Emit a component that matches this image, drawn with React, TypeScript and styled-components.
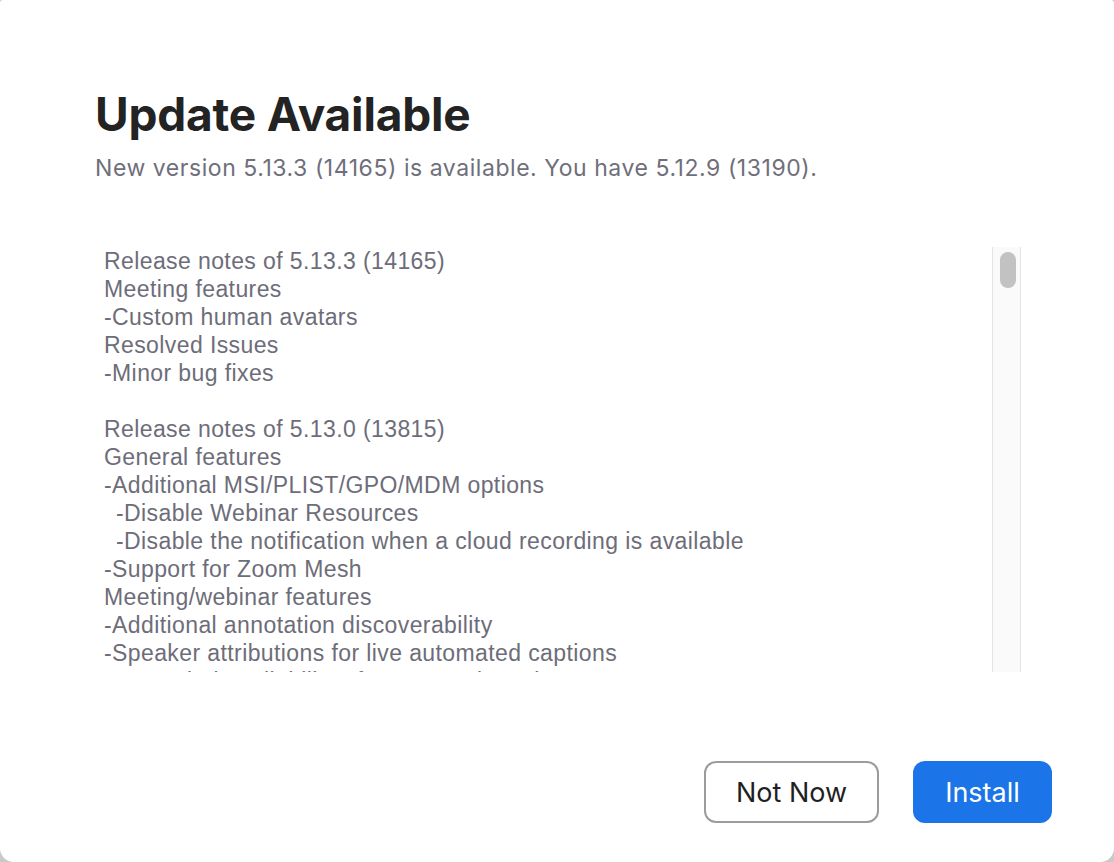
import React from "react";
import styled, { createGlobalStyle } from "styled-components";

const Global = createGlobalStyle`
  html, body { margin: 0; padding: 0; background: #c9c9c9; }
  body { width: 1114px; height: 862px; overflow: hidden; }
`;

const Window = styled.div`
  width: 1114px;
  height: 862px;
  box-sizing: border-box;
  background: #ffffff;
  border-radius: 3px 3px 14px 14px;
  display: flex;
  flex-direction: column;
  padding: 86px 62px 39px 95px;
`;

const Title = styled.h1`
  margin: 0;
  font-family: Inter, "Liberation Sans", sans-serif;
  font-weight: 700;
  font-size: 46px;
  line-height: 56px;
  color: #232323;
  letter-spacing: -0.2px;
`;

const Subtitle = styled.p`
  margin: 11px 0 0;
  font-family: Inter, "Liberation Sans", sans-serif;
  font-size: 23px;
  line-height: 30px;
  letter-spacing: 0.55px;
  color: #6f6f7b;
`;

const NotesBox = styled.div`
  margin-top: 64px;
  height: 425px;
  margin-right: 31px;
  display: flex;
  overflow: hidden;
`;

const Notes = styled.div`
  flex: 1;
  padding-left: 9px;
  font-family: "Liberation Sans", Arial, sans-serif;
  font-size: 23px;
  letter-spacing: 0.4px;
  line-height: 28px;
  color: #6d6d79;
  white-space: pre;
`;

const Line = styled.div<{ $indent?: boolean }>`
  height: 28px;
  padding-left: ${(p) => (p.$indent ? "12px" : "0")};
`;

const Track = styled.div`
  width: 29px;
  flex-shrink: 0;
  box-sizing: border-box;
  border-left: 1px solid #e4e4e4;
  border-right: 1px solid #e4e4e4;
  background: #fafafa;
  padding: 5px 0 0 7px;
`;

const Thumb = styled.div`
  width: 16px;
  height: 36px;
  border-radius: 8px;
  background: #c2c2c2;
`;

const Footer = styled.div`
  margin-top: auto;
  display: flex;
  justify-content: flex-end;
  gap: 34px;
`;

const Button = styled.button<{ $primary?: boolean }>`
  height: 62px;
  box-sizing: border-box;
  border-radius: 12px;
  font-family: Inter, "Liberation Sans", sans-serif;
  font-size: 27px;
  padding: 0;
  width: ${(p) => (p.$primary ? "139px" : "175px")};
  background: ${(p) => (p.$primary ? "#1b74e8" : "#ffffff")};
  color: ${(p) => (p.$primary ? "#ffffff" : "#1f1f24")};
  border: ${(p) => (p.$primary ? "none" : "2px solid #9c9c9c")};
`;

const lines: { t: string; indent?: boolean }[] = [
  { t: "Release notes of 5.13.3 (14165)" },
  { t: "Meeting features" },
  { t: "-Custom human avatars" },
  { t: "Resolved Issues" },
  { t: "-Minor bug fixes" },
  { t: "" },
  { t: "Release notes of 5.13.0 (13815)" },
  { t: "General features" },
  { t: "-Additional MSI/PLIST/GPO/MDM options" },
  { t: "-Disable Webinar Resources", indent: true },
  { t: "-Disable the notification when a cloud recording is available", indent: true },
  { t: "-Support for Zoom Mesh" },
  { t: "Meeting/webinar features" },
  { t: "-Additional annotation discoverability" },
  { t: "-Speaker attributions for live automated captions" },
  { t: "-Expanded availability of automated captions" },
];

export default function App() {
  return (
    <>
      <Global />
      <Window>
        <Title>Update Available</Title>
        <Subtitle>New version 5.13.3 (14165) is available. You have 5.12.9 (13190).</Subtitle>
        <NotesBox>
          <Notes>
            {lines.map((l, i) => (
              <Line key={i} $indent={l.indent}>
                {l.t}
              </Line>
            ))}
          </Notes>
          <Track>
            <Thumb />
          </Track>
        </NotesBox>
        <Footer>
          <Button>Not Now</Button>
          <Button $primary>Install</Button>
        </Footer>
      </Window>
    </>
  );
}
